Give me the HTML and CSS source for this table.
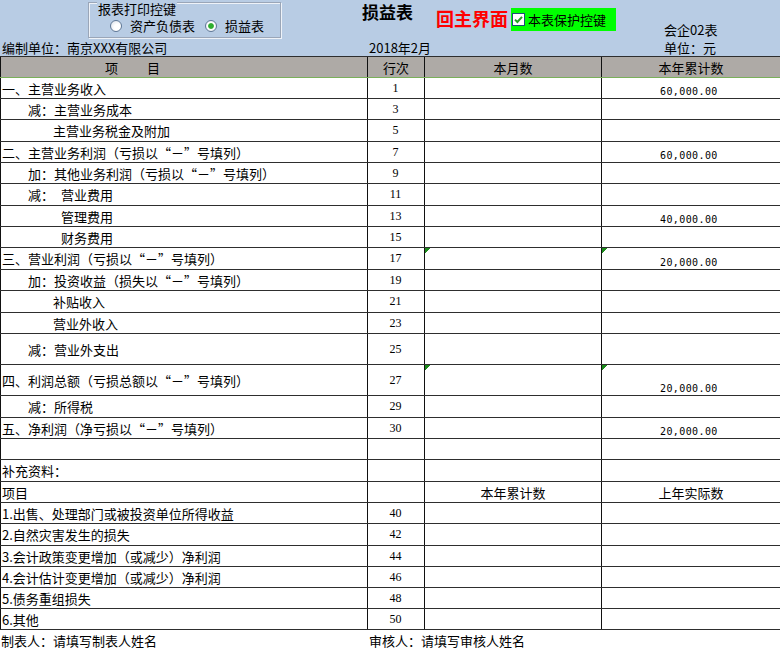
FILE: index.html
```html
<!DOCTYPE html>
<html lang="zh-CN">
<head>
<meta charset="utf-8">
<title>损益表</title>
<link rel="stylesheet" href="styles.css">
</head>
<body>
<div class="sheet">
  <div class="top">
    <div class="top-r1">
      <div class="grp">
        <div class="grp-title">报表打印控键</div>
        <div class="grp-opts">
          <span class="radio"></span><span class="opt">资产负债表</span>
          <span class="radio on"></span><span class="opt">损益表</span>
        </div>
      </div>
      <div class="title-cell"><span class="title">损益表</span></div>
      <div class="home">回主界面</div>
      <div class="protect">
        <svg width="13" height="13" viewBox="0 0 13 13"><rect x="0.5" y="0.5" width="12" height="12" fill="#fff" stroke="#1d4d78"/><path d="M3 6.6 L5.4 9 L10 3.9" fill="none" stroke="#23a023" stroke-width="2"/></svg>
        <span>本表保护控键</span>
      </div>
      <div class="form-no">会企02表</div>
    </div>
    <div class="top-r2">
      <div class="unit-name">编制单位：南京XXX有限公司</div>
      <div class="date">2018年2月</div>
      <div class="unit">单位：元</div>
    </div>
  </div>

  <div class="table">
    <div class="row hdr">
      <div class="hitem">项<span class="sp"></span>目</div>
      <div class="hc">行次</div>
      <div class="hc">本月数</div>
      <div class="hc">本年累计数</div>
    </div>
    <div class="row first">
      <div class="lbl">一、主营业务收入</div><div class="no">1</div><div></div><div class="val">60,000.00</div>
    </div>
    <div class="row">
      <div class="lbl i1">减：主营业务成本</div><div class="no">3</div><div></div><div></div>
    </div>
    <div class="row h22">
      <div class="lbl i2">主营业务税金及附加</div><div class="no">5</div><div></div><div></div>
    </div>
    <div class="row">
      <div class="lbl">二、主营业务利润（亏损以“－”号填列）</div><div class="no">7</div><div></div><div class="val">60,000.00</div>
    </div>
    <div class="row">
      <div class="lbl i1">加：其他业务利润（亏损以“－”号填列）</div><div class="no">9</div><div></div><div></div>
    </div>
    <div class="row h22">
      <div class="lbl i1">减：<span class="g7"></span>营业费用</div><div class="no">11</div><div></div><div></div>
    </div>
    <div class="row">
      <div class="lbl i3">管理费用</div><div class="no">13</div><div></div><div class="val">40,000.00</div>
    </div>
    <div class="row">
      <div class="lbl i3">财务费用</div><div class="no">15</div><div></div><div></div>
    </div>
    <div class="row h22">
      <div class="lbl">三、营业利润（亏损以“－”号填列）</div><div class="no">17</div><div class="mark"></div><div class="val mark">20,000.00</div>
    </div>
    <div class="row">
      <div class="lbl i1">加：投资收益（损失以“－”号填列）</div><div class="no">19</div><div></div><div></div>
    </div>
    <div class="row h22">
      <div class="lbl i2">补贴收入</div><div class="no">21</div><div></div><div></div>
    </div>
    <div class="row">
      <div class="lbl i2">营业外收入</div><div class="no">23</div><div></div><div></div>
    </div>
    <div class="row h31">
      <div class="lbl i1">减：营业外支出</div><div class="no">25</div><div></div><div></div>
    </div>
    <div class="row h31">
      <div class="lbl">四、利润总额（亏损总额以“－”号填列）</div><div class="no">27</div><div class="mark"></div><div class="val mark">20,000.00</div>
    </div>
    <div class="row h22">
      <div class="lbl i1">减：所得税</div><div class="no">29</div><div></div><div></div>
    </div>
    <div class="row">
      <div class="lbl">五、净利润（净亏损以“－”号填列）</div><div class="no">30</div><div></div><div class="val">20,000.00</div>
    </div>
    <div class="row">
      <div class="lbl"></div><div></div><div></div><div></div>
    </div>
    <div class="row h22">
      <div class="lbl">补充资料：</div><div></div><div></div><div></div>
    </div>
    <div class="row">
      <div class="lbl">项目</div><div></div><div class="hc">本年累计数</div><div class="hc">上年实际数</div>
    </div>
    <div class="row">
      <div class="lbl">1.出售、处理部门或被投资单位所得收益</div><div class="no">40</div><div></div><div></div>
    </div>
    <div class="row h22">
      <div class="lbl">2.自然灾害发生的损失</div><div class="no">42</div><div></div><div></div>
    </div>
    <div class="row">
      <div class="lbl">3.会计政策变更增加（或减少）净利润</div><div class="no">44</div><div></div><div></div>
    </div>
    <div class="row">
      <div class="lbl">4.会计估计变更增加（或减少）净利润</div><div class="no">46</div><div></div><div></div>
    </div>
    <div class="row">
      <div class="lbl">5.债务重组损失</div><div class="no">48</div><div></div><div></div>
    </div>
    <div class="row">
      <div class="lbl">6.其他</div><div class="no">50</div><div></div><div></div>
    </div>
    <div class="foot">
      <div class="lbl">制表人：请填写制表人姓名</div>
      <div class="lbl2">审核人：请填写审核人姓名</div>
    </div>
  </div>
</div>
</body>
</html>
```

FILE: styles.css
```css
html, body {
  margin: 0;
  padding: 0;
  background: #ffffff;
}

body {
  font-family: "Noto Sans CJK SC", "Liberation Sans", sans-serif;
  font-size: 13px;
  color: #000;
  width: 780px;
  height: 650px;
  overflow: hidden;
}

.sheet {
  width: 780px;
}

/* ---------- top area ---------- */
.top {
  background: #b8cce4;
  height: 56px;
}

.top-r1 {
  display: flex;
  height: 40px;
  align-items: flex-start;
}

.grp {
  margin: 2px 0 0 88px;
  width: 193px;
  height: 36px;
  box-sizing: border-box;
  border: 1px solid #9aa6b8;
  box-shadow: inset 1px 1px 0 #eef2f8, 1px 1px 0 #eef2f8;
}

.grp-title {
  width: fit-content;
  margin: -1px 0 0 8px;
  padding: 0 1px;
  background: #b8cce4;
  line-height: 14px;
}

.grp-opts {
  display: flex;
  align-items: center;
  height: 14px;
  margin-top: 3px;
  padding-left: 21px;
}

.radio {
  width: 12px;
  height: 12px;
  box-sizing: border-box;
  border-radius: 50%;
  border: 1px solid #5f7896;
  background: radial-gradient(circle at 65% 65%, #ffffff 35%, #d6dde6 100%);
  flex: none;
}

.radio.on {
  background: radial-gradient(circle, #2fae2f 0 2.4px, #9fd89f 2.9px, #ffffff 3.4px, #ffffff 45%, #d6dde6 100%);
}

.opt {
  margin-left: 8px;
  line-height: 14px;
}

.opt + .radio {
  margin-left: 10px;
}

.title-cell {
  width: 155px;
  box-sizing: border-box;
  padding: 1px 0 0 81px;
}

.title {
  display: inline-block;
  font-size: 17px;
  font-weight: bold;
  line-height: 22px;
}

.home {
  width: 75px;
  padding-top: 8px;
  font-size: 18px;
  font-weight: bold;
  line-height: 20px;
  color: #ff0000;
}

.protect {
  margin-top: 8px;
  width: 105px;
  height: 23px;
  box-sizing: border-box;
  background: #00ff00;
  display: flex;
  align-items: center;
  gap: 3px;
  padding-left: 1px;
}

.protect svg {
  flex: none;
}

.form-no {
  padding: 22px 0 0 48px;
  line-height: 15px;
}

.top-r2 {
  display: grid;
  grid-template-columns: 367px 297px 1fr;
  height: 16px;
  line-height: 16px;
}

.unit-name {
  padding-left: 2px;
}

.date {
  padding-left: 2px;
}

/* ---------- table ---------- */
.row {
  display: grid;
  grid-template-columns: 367px 57px 177px 179px;
  height: 21px;
  box-sizing: border-box;
  border-top: 1px solid #2e2e2e;
}

.row.h22 {
  height: 22px;
}

.row.h31 {
  height: 31px;
}

.row > div {
  border-left: 1px solid #111;
  display: flex;
  align-items: center;
  white-space: nowrap;
  overflow: hidden;
  line-height: 15px;
}

.row.hdr {
  background: #aeaaa6;
}

.row.first {
  border-top-color: #7ab05a;
}

.hitem {
  padding-left: 104px;
}

.sp {
  display: inline-block;
  width: 29px;
}

.g7 {
  display: inline-block;
  width: 7px;
}

.row > .hc {
  justify-content: center;
}

.row > .lbl {
  padding-left: 1px;
}

.row > .i1 {
  padding-left: 27px;
}

.row > .i2 {
  padding-left: 52px;
}

.row > .i3 {
  padding-left: 60px;
}

.row > .no {
  justify-content: center;
  font-family: "Liberation Serif", serif;
  font-size: 12px;
  padding-right: 1px;
}

.row > .val {
  align-items: flex-end;
  padding: 0 0 1px 58px;
  font-family: "DejaVu Sans Mono", monospace;
  font-size: 10px;
  letter-spacing: 0.4px;
  line-height: 11px;
}

.row > .mark {
  background: linear-gradient(135deg, #1c8a1c 0 3.6px, transparent 3.6px) no-repeat;
  background-size: 6px 6px;
}

.foot {
  display: grid;
  grid-template-columns: 367px 1fr;
  height: 21px;
  box-sizing: border-box;
  border-top: 1px solid #2e2e2e;
  align-items: center;
  line-height: 15px;
}

.foot .lbl {
  padding-left: 1px;
}

.foot .lbl2 {
  padding-left: 2px;
}
```
